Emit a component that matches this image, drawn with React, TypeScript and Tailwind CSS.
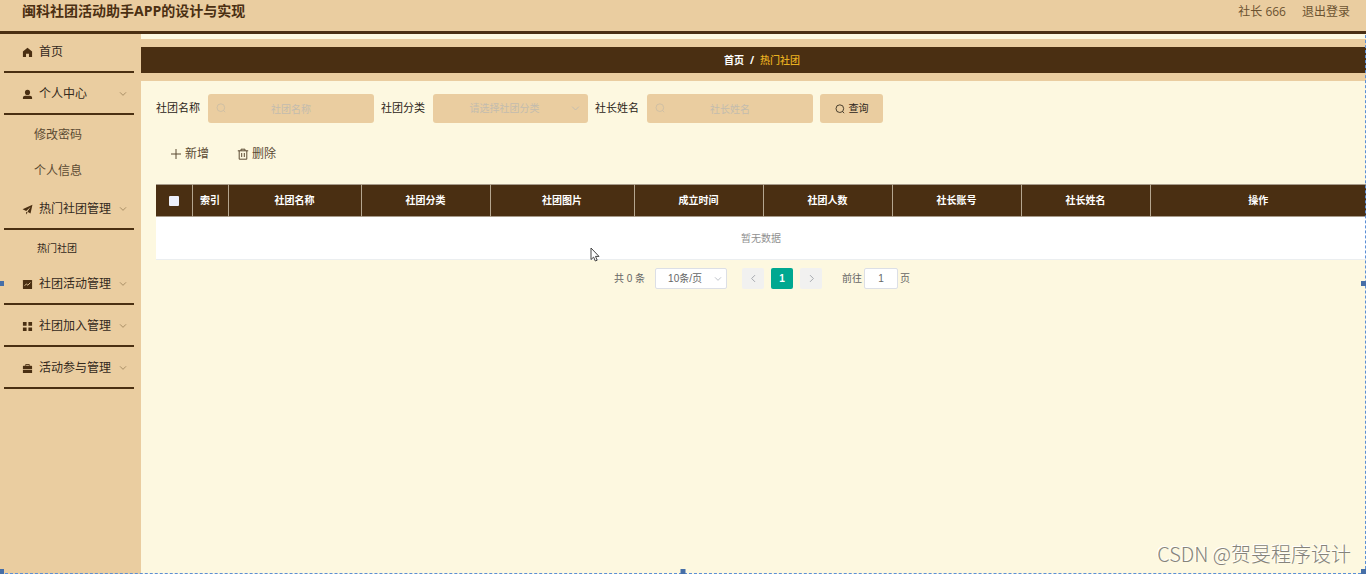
import { useState, type ReactNode } from "react";

type MenuItem = {
    title: string,
    icon: ReactNode,
    children?: string[],
    childClass?: string,
}

function HomeIcon() {
    return (
        <svg viewBox="0 0 12 12" className="size-[11px] shrink-0 fill-[#4a2f12]">
            <path d="M6 .9 11 5v6H7.6V7.4H4.4V11H1V5z" />
        </svg>
    )
}

function UserIcon() {
    return (
        <svg viewBox="0 0 12 12" className="size-[11px] shrink-0 fill-[#4a2f12]">
            <circle cx="6" cy="3.7" r="2.8" />
            <path d="M1 11V9.6C1 8.2 2 7.3 3.4 7.3h5.2C10 7.3 11 8.2 11 9.6V11z" />
        </svg>
    )
}

function PlaneIcon() {
    return (
        <svg viewBox="0 0 12 12" className="size-[11px] shrink-0 fill-[#4a2f12]">
            <path d="M11.4.8 9.3 10.4 6 8.5 9.3 3.4 4.6 7.6.6 5.8zM4.5 8.4l1.7.9-1.7 2.1z" />
        </svg>
    )
}

function ChartIcon() {
    return (
        <svg viewBox="0 0 12 12" className="size-[11px] shrink-0">
            <rect x="1" y="1" width="10" height="10" rx=".6" fill="#4a2f12" />
            <path d="m2.8 7.4 2-2 1.6 1.4 2.8-2.9" fill="none" stroke="#eacda0" strokeWidth="1" />
        </svg>
    )
}

function GridIcon() {
    return (
        <svg viewBox="0 0 12 12" className="size-[11px] shrink-0 fill-[#4a2f12]">
            <path d="M1 1.2h4v4H1zM7 1.2h4v4H7zM1 7h4v4H1zM7 7h4v4H7z" />
        </svg>
    )
}

function BriefcaseIcon() {
    return (
        <svg viewBox="0 0 12 12" className="size-[11px] shrink-0">
            <path d="M4 3V1.7h4V3" fill="none" stroke="#4a2f12" strokeWidth="1" />
            <path d="M1.6 3h8.8l.6.6v3.2H1V3.6zM1 7.6h10V11H1z" fill="#4a2f12" />
        </svg>
    )
}

function Chevron({ className, d = "m1.5 3.5 4.5 4.5 4.5-4.5" }: { className: string, d?: string }) {
    return (
        <svg viewBox="0 0 12 12" fill="none" stroke="currentColor" strokeWidth="1.3" className={className}>
            <path d={d} />
        </svg>
    )
}

function SearchIcon({ className }: { className: string }) {
    return (
        <svg viewBox="0 0 12 12" fill="none" stroke="currentColor" strokeWidth="1" className={className}>
            <circle cx="5.8" cy="5.6" r="4.6" />
            <path d="m9 9 2 2" />
        </svg>
    )
}

const menu: MenuItem[] = [
    { title: "首页", icon: <HomeIcon /> },
    { title: "个人中心", icon: <UserIcon />, children: ["修改密码", "个人信息"], childClass: "h-9 pl-[34px] pt-[3px] text-xs text-[#5c4b33]" },
    { title: "热门社团管理", icon: <PlaneIcon />, children: ["热门社团"], childClass: "h-[33px] pl-[37px] pt-[3px] text-[10px] text-[#33291c]" },
    { title: "社团活动管理", icon: <ChartIcon /> },
    { title: "社团加入管理", icon: <GridIcon /> },
    { title: "活动参与管理", icon: <BriefcaseIcon /> },
]

const columns = [
    { title: "索引", width: "w-[36px]" },
    { title: "社团名称", width: "w-[133px]" },
    { title: "社团分类", width: "w-[129px]" },
    { title: "社团图片", width: "w-[144px]" },
    { title: "成立时间", width: "w-[129px]" },
    { title: "社团人数", width: "w-[129px]" },
    { title: "社长账号", width: "w-[129px]" },
    { title: "社长姓名", width: "w-[129px]" },
    { title: "操作", width: "w-[216px]" },
]

function SideBar() {
    return (
        <nav className="w-[141px] shrink-0 bg-[#eacda0]">
            <ul>
                {menu.map((item, index) => (
                    <li key={item.title}>
                        <a href="#" className="ml-1 mr-[7px] flex h-[42px] items-center border-b-2 border-[#4a2f12] pl-[18px] pr-[7px] pt-[2px] text-xs text-[#33291c]">
                            {item.icon}
                            <span className="ml-[6px] flex-1 whitespace-nowrap">{item.title}</span>
                            {index > 0 && <Chevron className="size-2 text-[#9c835c]" />}
                        </a>
                        {item.children && <ul className={item.children.length > 1 ? "pb-px" : ""}>
                            {item.children.map((child) => (
                                <li key={child}>
                                    <a href="#" className={`flex items-center ${item.childClass}`}>{child}</a>
                                </li>
                            ))}
                        </ul>}
                    </li>
                ))}
            </ul>
        </nav>
    )
}

function SearchInput({ id, label }: { id: string, label: string }) {
    return (
        <div className="flex items-center gap-2">
            <label htmlFor={id}>{label}</label>
            <div className="relative">
                <SearchIcon className="absolute left-2 top-[9px] size-[10px] text-[#cabda5]" />
                <input id={id} type="text" placeholder={label} className="block h-[29px] w-[166px] rounded-[3px] bg-[#eacda0] px-6 text-center text-[10px] text-[#4a2f12] placeholder:text-[#c3bcae]" />
            </div>
        </div>
    )
}

function SearchForm() {
    return (
        <form className="flex flex-wrap items-center gap-[7px] text-[11px] text-[#2b2418]" onSubmit={(e) => e.preventDefault()}>
            <SearchInput id="clubName" label="社团名称" />
            <div className="flex items-center gap-2">
                <label htmlFor="clubType">社团分类</label>
                <div className="relative">
                    <select id="clubType" defaultValue="" className="block h-[29px] w-[155px] appearance-none rounded-[3px] bg-[#eacda0] pl-3 pr-6 text-center text-[10px] text-[#c3bcae] [text-align-last:center]">
                        <option value="">请选择社团分类</option>
                    </select>
                    <Chevron className="pointer-events-none absolute right-2 top-[10px] size-[9px] text-[#c3bcae]" />
                </div>
            </div>
            <SearchInput id="leaderName" label="社长姓名" />
            <button type="submit" className="flex h-[29px] w-[63px] items-center justify-center gap-1 rounded-[3px] bg-[#eacda0] text-[10px]">
                <SearchIcon className="size-[10px]" />
                查询
            </button>
        </form>
    )
}

function ClubTable() {
    return (
        <table className="mt-[17px] w-full table-fixed border-collapse text-[10px]">
            <thead>
                <tr className="h-8 border-y border-[#a79b8a] bg-[#4a2f12] text-white">
                    <th className="w-[36px] border-r border-[#b5a68f]">
                        <input type="checkbox" aria-label="全选" className="mx-auto block size-[10px] appearance-none rounded-[1px] bg-[#eef0fa] checked:bg-[#00a890]" />
                    </th>
                    {columns.map((column) => (
                        <th key={column.title} className={`${column.width} border-r border-[#b5a68f] font-bold last:border-r-0`}>{column.title}</th>
                    ))}
                </tr>
            </thead>
            <tbody>
                <tr className="h-[43px] border-b border-[#ebeef0] bg-white">
                    <td colSpan={10} className="text-center text-[#909090]">暂无数据</td>
                </tr>
            </tbody>
        </table>
    )
}

function Pagination() {
    const [page, setPage] = useState("1");

    return (
        <div className="mt-2 flex items-center justify-center pl-[2px] font-['Liberation_Sans','Noto_Sans_CJK_SC',sans-serif] text-[10px] text-[#666]">
            <span>共 0 条</span>
            <div className="relative ml-[10px]">
                <select aria-label="每页条数" className="block h-[21px] w-[72px] appearance-none rounded-[2px] border border-[#dcdfe6] bg-white pl-[6px] pr-[18px] text-center [text-align-last:center]">
                    <option>10条/页</option>
                </select>
                <Chevron className="pointer-events-none absolute right-[5px] top-[7px] size-2 text-[#b4b8c0]" />
            </div>
            <button aria-label="上一页" className="ml-[15px] flex h-[21px] w-[22px] items-center justify-center rounded-[2px] bg-[#f1f1f0]">
                <Chevron d="M8 1.5 3.5 6 8 10.5" className="size-[9px] text-[#a4a7ad]" />
            </button>
            <button className="ml-[7px] h-[21px] w-[22px] rounded-[2px] bg-[#00a890] font-bold text-white">1</button>
            <button aria-label="下一页" className="ml-[7px] flex h-[21px] w-[22px] items-center justify-center rounded-[2px] bg-[#f1f1f0]">
                <Chevron d="M4 1.5 8.5 6 4 10.5" className="size-[9px] text-[#a4a7ad]" />
            </button>
            <label htmlFor="jump" className="ml-5">前往</label>
            <input id="jump" type="text" value={page} onChange={(e) => setPage(e.target.value)} className="mx-[2px] h-[21px] w-[34px] rounded-[2px] border border-[#dcdfe6] bg-white text-center" />
            <span>页</span>
        </div>
    )
}

export default function App() {
    return (
        <div className="relative flex min-h-screen flex-col overflow-hidden bg-[#fdf8e0] font-['Open_Sans','Noto_Sans_CJK_SC',sans-serif]">
            <header className="z-10 flex h-[31px] items-start justify-between bg-[#eacda0] pl-[22px] pr-4 shadow-[0_3px_0_#4a2f12]">
                <h1 className="text-sm font-bold leading-[22px] text-[#4a2f12]">闽科社团活动助手APP的设计与实现</h1>
                <div className="flex gap-4 text-xs leading-6 text-[#6b5230]">
                    <span>社长 666</span>
                    <a href="#">退出登录</a>
                </div>
            </header>

            <div className="flex flex-1">
                <SideBar />
                <main className="min-w-0 flex-1 pt-2">
                    <div className="border-y-8 border-[#eacda0]">
                        <div className="flex h-[26px] items-center justify-center gap-[6px] bg-[#4a2f12] pl-[17px] text-[10px] font-bold text-white">
                            <a href="#">首页</a>
                            <span>/</span>
                            <span className="font-medium text-[#e8b020]">热门社团</span>
                        </div>
                    </div>
                    <div className="pl-[15px] pt-[13px]">
                        <SearchForm />
                        <div className="mt-[17px] flex text-xs text-[#5a4a33]">
                            <button className="flex h-[27px] items-center gap-[3px] px-[14px]">
                                <svg viewBox="0 0 12 12" fill="none" stroke="currentColor" className="size-3">
                                    <path d="M6 1v10M1 6h10" />
                                </svg>
                                新增
                            </button>
                            <button className="flex h-[27px] items-center gap-[3px] px-[14px]">
                                <svg viewBox="0 0 12 12" fill="none" stroke="currentColor" className="size-3">
                                    <path d="M.8 2.8h10.4M4 2.8V1.2h4v1.6M2.2 2.8v8.4h7.6V2.8M4.7 5v4M7.3 5v4" />
                                </svg>
                                删除
                            </button>
                        </div>
                        <ClubTable />
                        <Pagination />
                    </div>
                </main>
            </div>

            {/* mouse pointer */}
            <svg viewBox="0 0 10 15" className="pointer-events-none absolute left-[590px] top-[247px] h-[15px] w-[10px]">
                <path d="M1 1v11.5l2.6-2.4 1.7 3.9 1.9-.8-1.7-3.8H9z" fill="#fff" stroke="#444" strokeWidth="1" />
            </svg>

            <p className="pointer-events-none absolute bottom-[5px] right-[15px] font-['Noto_Sans_CJK_SC',sans-serif] text-xl font-light leading-[30px] text-[#85837b] [text-shadow:-1px_-1px_0_#fff]">CSDN @贺旻程序设计</p>

            {/* selection frame */}
            <div className="pointer-events-none absolute inset-0 border-b border-r border-dashed border-[#5b8fd6]">
                <i className="absolute left-0 top-[49%] h-[5px] w-1 bg-[#466fa8]" />
                <i className="absolute -right-px top-[49%] size-[5px] bg-[#466fa8]" />
                <i className="absolute -bottom-px left-0 h-[5px] w-1 bg-[#466fa8]" />
                <i className="absolute -bottom-px left-1/2 size-[5px] -translate-x-1/2 bg-[#466fa8]" />
                <i className="absolute -bottom-px -right-px size-[5px] bg-[#466fa8]" />
            </div>
        </div>
    )
}
